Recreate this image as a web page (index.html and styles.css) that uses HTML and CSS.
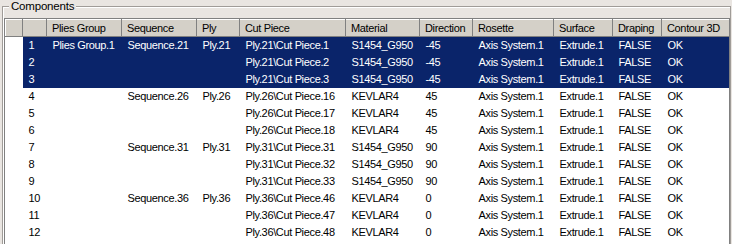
FILE: index.html
```html
<!DOCTYPE html>
<html>
<head>
<meta charset="utf-8">
<link rel="stylesheet" href="styles.css">
</head>
<body>
<div class="group">
  <div class="legend">Components</div>
  <div class="frame">
    <table class="grid">
      <colgroup>
        <col class="c0"><col class="c1"><col class="c2"><col class="c3"><col class="c4"><col class="c5"><col class="c6"><col class="c7"><col class="c8"><col class="c9"><col class="c10"><col class="c11">
      </colgroup>
      <thead>
        <tr><th></th><th></th><th>Plies Group</th><th>Sequence</th><th>Ply</th><th>Cut Piece</th><th>Material</th><th>Direction</th><th>Rosette</th><th>Surface</th><th>Draping</th><th>Contour 3D</th></tr>
      </thead>
      <tbody>
        <tr class="sel"><td class="blank"></td><td>1</td><td>Plies Group.1</td><td>Sequence.21</td><td>Ply.21</td><td>Ply.21\Cut Piece.1</td><td>S1454_G950</td><td>-45</td><td>Axis System.1</td><td>Extrude.1</td><td>FALSE</td><td>OK</td></tr>
        <tr class="sel"><td class="blank"></td><td>2</td><td></td><td></td><td></td><td>Ply.21\Cut Piece.2</td><td>S1454_G950</td><td>-45</td><td>Axis System.1</td><td>Extrude.1</td><td>FALSE</td><td>OK</td></tr>
        <tr class="sel"><td class="blank"></td><td>3</td><td></td><td></td><td></td><td>Ply.21\Cut Piece.3</td><td>S1454_G950</td><td>-45</td><td>Axis System.1</td><td>Extrude.1</td><td>FALSE</td><td>OK</td></tr>
        <tr><td class="blank"></td><td>4</td><td></td><td>Sequence.26</td><td>Ply.26</td><td>Ply.26\Cut Piece.16</td><td>KEVLAR4</td><td>45</td><td>Axis System.1</td><td>Extrude.1</td><td>FALSE</td><td>OK</td></tr>
        <tr><td class="blank"></td><td>5</td><td></td><td></td><td></td><td>Ply.26\Cut Piece.17</td><td>KEVLAR4</td><td>45</td><td>Axis System.1</td><td>Extrude.1</td><td>FALSE</td><td>OK</td></tr>
        <tr><td class="blank"></td><td>6</td><td></td><td></td><td></td><td>Ply.26\Cut Piece.18</td><td>KEVLAR4</td><td>45</td><td>Axis System.1</td><td>Extrude.1</td><td>FALSE</td><td>OK</td></tr>
        <tr><td class="blank"></td><td>7</td><td></td><td>Sequence.31</td><td>Ply.31</td><td>Ply.31\Cut Piece.31</td><td>S1454_G950</td><td>90</td><td>Axis System.1</td><td>Extrude.1</td><td>FALSE</td><td>OK</td></tr>
        <tr><td class="blank"></td><td>8</td><td></td><td></td><td></td><td>Ply.31\Cut Piece.32</td><td>S1454_G950</td><td>90</td><td>Axis System.1</td><td>Extrude.1</td><td>FALSE</td><td>OK</td></tr>
        <tr><td class="blank"></td><td>9</td><td></td><td></td><td></td><td>Ply.31\Cut Piece.33</td><td>S1454_G950</td><td>90</td><td>Axis System.1</td><td>Extrude.1</td><td>FALSE</td><td>OK</td></tr>
        <tr><td class="blank"></td><td>10</td><td></td><td>Sequence.36</td><td>Ply.36</td><td>Ply.36\Cut Piece.46</td><td>KEVLAR4</td><td>0</td><td>Axis System.1</td><td>Extrude.1</td><td>FALSE</td><td>OK</td></tr>
        <tr><td class="blank"></td><td>11</td><td></td><td></td><td></td><td>Ply.36\Cut Piece.47</td><td>KEVLAR4</td><td>0</td><td>Axis System.1</td><td>Extrude.1</td><td>FALSE</td><td>OK</td></tr>
        <tr><td class="blank"></td><td>12</td><td></td><td></td><td></td><td>Ply.36\Cut Piece.48</td><td>KEVLAR4</td><td>0</td><td>Axis System.1</td><td>Extrude.1</td><td>FALSE</td><td>OK</td></tr>
      </tbody>
    </table>
  </div>
</div>
</body>
</html>
```

FILE: styles.css
```css
html, body {
  margin: 0;
  padding: 0;
  background: #e9e5e1;
  width: 732px;
  height: 244px;
  overflow: hidden;
  font-family: "Liberation Sans", Arial, sans-serif;
  font-size: 11px;
  letter-spacing: -0.35px;
  color: #000;
}

.group {
  position: relative;
  box-sizing: border-box;
  margin: 6px 1px 0 2px;
  border: 1px solid #a09c98;
  border-bottom: none;
  box-shadow: inset 1px 1px 0 #fff;
  height: 238px;
  padding: 11px 1px 0 1px;
}

.legend {
  position: absolute;
  left: 6px;
  top: -7px;
  padding: 0 2px;
  background: #e9e5e1;
  line-height: 13px;
  font-size: 11.5px;
  letter-spacing: -0.2px;
}

.frame {
  border-top: 1px solid #808080;
  border-left: 1px solid #808080;
  border-right: 1px solid #808080;
  background: #fff;
  width: 724px;
  height: 226px;
  overflow: hidden;
}

.grid {
  border-collapse: collapse;
  table-layout: fixed;
  width: 724px;
}

.c0 { width: 17px; }
.c1 { width: 24px; }
.c2 { width: 75px; }
.c3 { width: 75px; }
.c4 { width: 43px; }
.c5 { width: 106px; }
.c6 { width: 74px; }
.c7 { width: 53px; }
.c8 { width: 81px; }
.c9 { width: 59px; }
.c10 { width: 49px; }
.c11 { width: 68px; }

.grid th {
  height: 17px;
  box-sizing: border-box;
  padding: 0 0 0 5px;
  background: #d4d0c8;
  border-top: 1px solid #fff;
  border-left: 1px solid #fff;
  border-right: 1px solid #808080;
  border-bottom: 1px solid #808080;
  font-weight: normal;
  text-align: left;
  white-space: nowrap;
  overflow: hidden;
  line-height: 14px;
}

.grid td {
  height: 17px;
  padding: 0 0 0 6px;
  white-space: nowrap;
  overflow: hidden;
  line-height: 17px;
}

.grid tr.sel td {
  background: #0a246a;
  color: #fff;
}

.grid tr.sel td.blank {
  background: #fff;
}
```
